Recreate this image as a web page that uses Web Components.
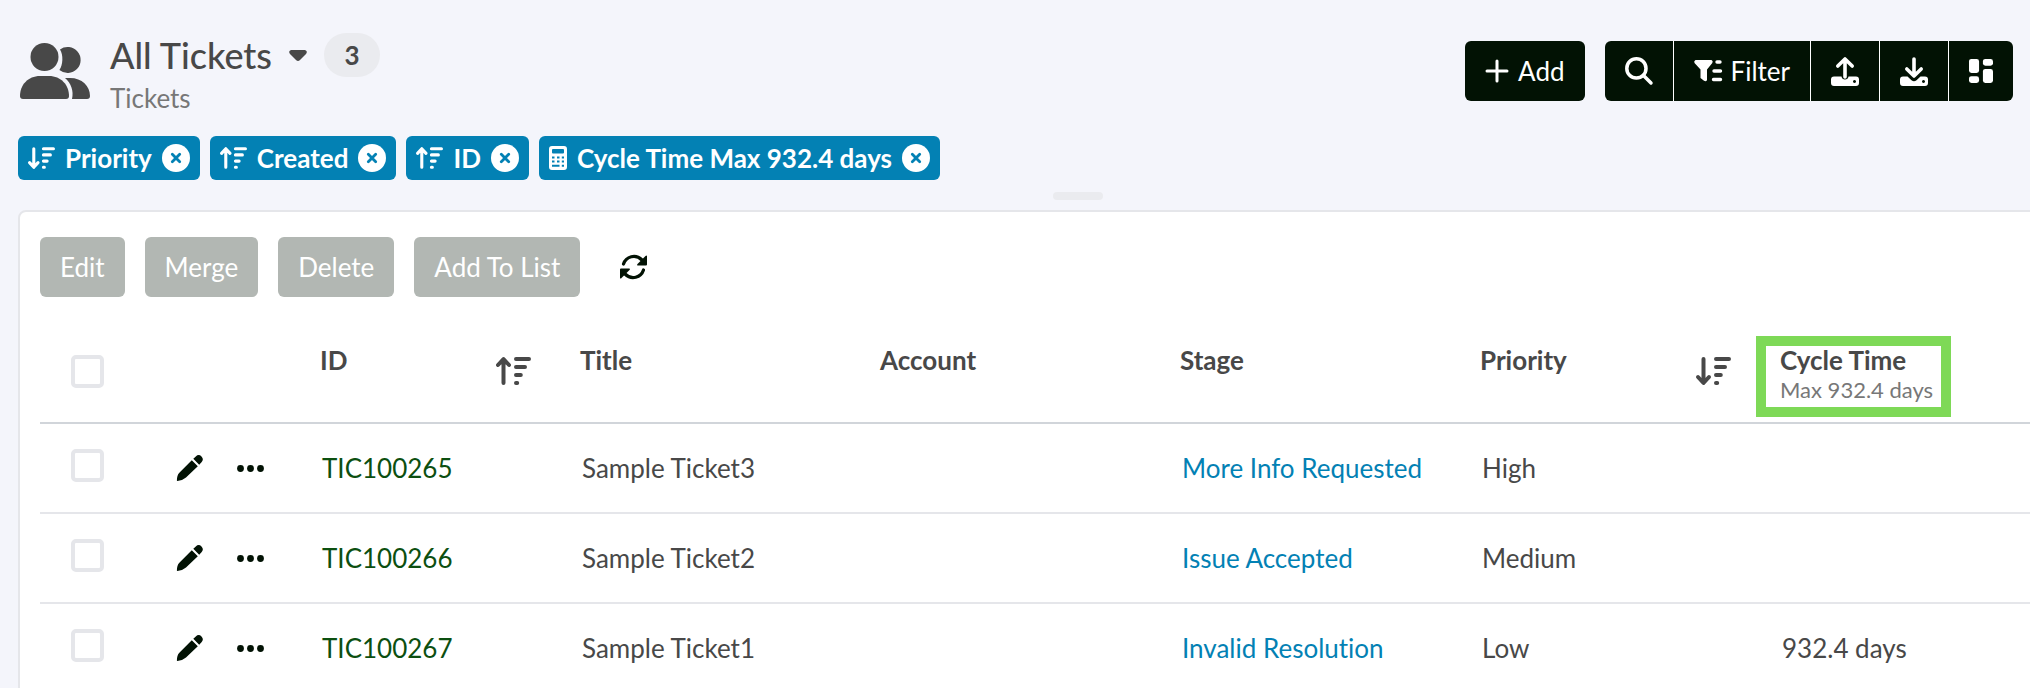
<!DOCTYPE html>
<html lang="en">
<head>
<meta charset="utf-8">
<title>All Tickets</title>
<style>
  html, body { margin: 0; height: 100%; }
  body { background: #f4f5fb; overflow: hidden; }
</style>
</head>
<body>
<ticket-app></ticket-app>
<script>
const ICONS = {
  users: ['0 0 70 56', '<circle cx="24.500" cy="14" r="14"/><path d="M40 6.500a13 13 0 1 1-.6 20.600C43 22 43.500 12 40 6.500z"/><path d="M29 33h-9C8 33 0 42 0 53q0 3 3 3h43q3 0 3-3c0-11-8-20-20-20z"/><path d="M45 35h5c12 0 20 8 20 18q0 3-3 3H52c2-8-1-16-7-21z"/>'],
  caret: ['0 0 18 11', '<path d="M2 0h14q3 1 1 4l-6 6q-2 2-4 0L1 4Q-1 1 2 0z"/>'],
  plus: ['0 0 24 24', '<path d="M12 2v20M2 12h20" fill="none" stroke="currentColor" stroke-width="3" stroke-linecap="round"/>'],
  search: ['0 0 28 28', '<g fill="none" stroke="currentColor" stroke-width="3.500"><circle cx="11.400" cy="11.400" r="9.600"/><path d="M18.500 18.500l7.500 7.500" stroke-linecap="round"/></g>'],
  filter: ['0 0 28 22', '<path d="M1.500 0h16q2 1 .8 3L13 9.500V20q-.8 2-3 .8L6.500 18V9.500L.5 3Q-.5 1 1.500 0z"/><path d="M23 2h3M20 11h6.500M19.500 19.500h7" fill="none" stroke="currentColor" stroke-width="3.400" stroke-linecap="round"/>'],
  upload: ['0 0 28 29', '<path d="M3 19.500h7.500q.5 3 3.500 3t3.500-3H25q3 0 3 3V26q0 3-3 3H3q-3 0-3-3v-3.500q0-3 3-3zM23.500 23a1.500 1.500 0 1 0 .01 0z" fill-rule="evenodd"/><path d="M14 20V2M6.800 9L14 2l7.200 7" fill="none" stroke="currentColor" stroke-width="3.600" stroke-linecap="round" stroke-linejoin="round"/>'],
  download: ['0 0 28 29', '<path d="M3 19.500h4.500l4 3.700q2.500 2.200 5 0l4-3.700H25q3 0 3 3V26q0 3-3 3H3q-3 0-3-3v-3.500q0-3 3-3zM23.500 23a1.500 1.500 0 1 0 .01 0z" fill-rule="evenodd"/><path d="M14 2v17M6.800 12l7.200 7 7.200-7" fill="none" stroke="currentColor" stroke-width="3.600" stroke-linecap="round" stroke-linejoin="round"/>'],
  board: ['0 0 25 25', '<rect width="10.500" height="14.500" rx="2.600"/><rect y="18" width="10.500" height="7" rx="2.600"/><rect x="14.500" width="10.500" height="7" rx="2.600"/><rect x="14.500" y="10.500" width="10.500" height="14.500" rx="2.600"/>'],
  down: ['0 0 35 28', '<path d="M7.500 2v23M2 20l5.500 6 5.500-6M20 2h13M20 10h9M20 18h4.800M20 26h1.200" fill="none" stroke="currentColor" stroke-width="4" stroke-linecap="round" stroke-linejoin="round"/>'],
  up: ['0 0 35 28', '<path d="M7.500 3v23M2 8l5.500-6 5.500 6M20 2h13M20 10h9M20 18h4.800M20 26h1.200" fill="none" stroke="currentColor" stroke-width="4" stroke-linecap="round" stroke-linejoin="round"/>'],
  calc: ['0 0 18 24', '<path fill-rule="evenodd" d="M3 0h12q3 0 3 3v18q0 3-3 3H3q-3 0-3-3V3q0-3 3-3zm1 3q-1 0-1 1v2.500q0 1 1 1h10q1 0 1-1V4q0-1-1-1zM3 10.500h2.500v2H3zm5 0h2.500v2H8zm4.800 0H15v2h-2.200zM3 14.500h2.500v2H3zm5 0h2.500v2H8zm4.800 0H15v2h-2.200zM3 18.700h7.500v2H3zm9.800 0H15v2h-2.200z"/>'],
  close: ['0 0 28 28', '<circle cx="14" cy="14" r="14"/><path d="M10.300 10.300l7.400 7.400M17.700 10.300l-7.400 7.400" stroke="#0381b4" stroke-width="2.800" stroke-linecap="round"/>'],
  refresh: ['0 0 27 26', '<g fill="none" stroke="currentColor" stroke-width="3.200" stroke-linecap="round"><path d="M3.500 10C6 2.500 15.500-.5 22 6"/><path d="M23.500 16C21 23.500 11.500 26.500 5 20"/></g><path d="M27 2v8.500q0 1-1 1h-8.500q-1-.5 0-1.500L25.500 2q1-1 1.500 0zM0 24v-8.500q0-1 1-1h8.500q1 .5 0 1.500L1.500 24q-1 1-1.500 0z"/>'],
  pencil: ['0 0 26 26', '<path d="M14.800 5.200l6 6L9 22.500Q5.500 25.600.4 26-.3 26-.1 25.300C0 22 .5 19.500 2.600 17.500z"/><path d="M16.300 3.800l2.500-2.400q3-2.600 5.700.1 2.700 2.800 0 5.700l-2.300 2.500z"/>'],
  dots: ['0 0 27 7', '<circle cx="3.500" cy="3.500" r="3.400"/><circle cx="13.500" cy="3.500" r="3.400"/><circle cx="23.500" cy="3.500" r="3.400"/>']
};

const BUTTON_RESET = `
  button { font: inherit; color: inherit; border: 0; margin: 0; padding: 0; background: none; cursor: pointer; }
  *, *::before { box-sizing: border-box; }`;

class UiElement extends HTMLElement {
  connectedCallback() {
    if (this.shadowRoot) return;
    this.attachShadow({ mode: 'open' }).innerHTML = `<style>${BUTTON_RESET}${this.css()}</style>${this.html()}`;
  }
}

/* <ui-icon name="..." size="width in px"> */
customElements.define('ui-icon', class extends UiElement {
  css() { return `:host { display: block; flex: none; } svg { display: block; overflow: visible; }`; }
  html() {
    const [box, shapes] = ICONS[this.getAttribute('name')];
    const [, , w, h] = box.split(' ').map(Number);
    const width = Number(this.getAttribute('size') || w);
    return `<svg aria-hidden="true" viewBox="${box}" width="${width}" height="${Math.round(width * h / w)}" fill="currentColor">${shapes}</svg>`;
  }
});

customElements.define('sort-chip', class extends UiElement {
  css() { return `
    :host { display: flex; align-items: center; gap: 10px; height: 44px; padding: 0 10px;
      border-radius: 6px; background: #0381b4; color: #fff; font-weight: 700; white-space: nowrap; }
    button { border-radius: 50%; }`; }
  html() {
    const icon = this.getAttribute('icon');
    return `<ui-icon name="${icon}" size="${icon === 'calc' ? 18 : 27}"></ui-icon><slot></slot>
      <button type="button" aria-label="Remove"><ui-icon name="close"></ui-icon></button>`;
  }
});

customElements.define('page-header', class extends UiElement {
  css() { return `
    :host { display: flex; justify-content: space-between; padding: 33px 17px 0 20px; }
    .identity { display: flex; gap: 20px; }
    .identity > ui-icon { padding-top: 10px; }
    .line { display: flex; align-items: center; height: 44px; gap: 17px; }
    h1 { margin: 0; font-size: 36px; line-height: 44px; font-weight: 500; }
    .count { min-width: 56px; text-align: center; line-height: 44px; border-radius: 22px; background: #eaebef; font-weight: 700; }
    p { margin: 0; line-height: 42px; color: #777; }
    .actions { display: flex; gap: 20px; padding-top: 8px; }
    .actions button { display: flex; align-items: center; justify-content: center; gap: 9px; height: 60px; padding: 0 20px; background: #021204; color: #fff; }
    .add { border-radius: 6px; }
    .group { display: flex; gap: 1px; background: #fff; border-radius: 6px; overflow: hidden; height: 60px; }`; }
  html() { return `
    <div class="identity">
      <ui-icon name="users"></ui-icon>
      <div>
        <div class="line"><h1>All Tickets</h1>
          <button type="button" aria-label="Choose list"><ui-icon name="caret"></ui-icon></button>
          <span class="count">3</span></div>
        <p>Tickets</p>
      </div>
    </div>
    <div class="actions">
      <button type="button" class="add"><ui-icon name="plus"></ui-icon>Add</button>
      <div class="group">
        <button type="button" aria-label="Search"><ui-icon name="search"></ui-icon></button>
        <button type="button"><ui-icon name="filter"></ui-icon>Filter</button>
        <button type="button" aria-label="Import"><ui-icon name="upload"></ui-icon></button>
        <button type="button" aria-label="Export"><ui-icon name="download"></ui-icon></button>
        <button type="button" aria-label="Layout"><ui-icon name="board" size="24"></ui-icon></button>
      </div>
    </div>`; }
});

customElements.define('bulk-actions', class extends UiElement {
  css() { return `
    :host { display: flex; align-items: center; gap: 20px; }
    .bulk { height: 60px; padding: 0 20px; border-radius: 6px; background: #b2b7b3; color: #fff; }
    .refresh { padding: 0 20px; color: #021204; }`; }
  html() {
    return ['Edit', 'Merge', 'Delete', 'Add To List']
      .map(t => `<button type="button" class="bulk" disabled>${t}</button>`).join('')
      + `<button type="button" class="refresh" aria-label="Refresh"><ui-icon name="refresh"></ui-icon></button>`;
  }
});

const TICKETS = [
  ['TIC100265', 'Sample Ticket3', '', 'More Info Requested', 'High', ''],
  ['TIC100266', 'Sample Ticket2', '', 'Issue Accepted', 'Medium', ''],
  ['TIC100267', 'Sample Ticket1', '', 'Invalid Resolution', 'Low', '932.4 days']
];

customElements.define('ticket-table', class extends UiElement {
  css() { return `
    :host { display: block; }
    table { width: 100%; table-layout: fixed; border-collapse: separate; border-spacing: 0; }
    .c-check { width: 95px; } .c-tools { width: 175px; } .c-id { width: 260px; } .c-wide { width: 300px; }
    th, td { padding: 0; text-align: left; vertical-align: middle; white-space: nowrap; }
    th { height: 104px; font-weight: 700; border-bottom: 2px solid #d1d5da; }
    td { height: 90px; border-bottom: 2px solid #e5e6ea; }
    .check { text-align: center; }
    input { appearance: none; display: block; width: 33px; height: 33px; margin: 0 auto; border: 4px solid #e5e6ea; border-radius: 5px; background: #fff; }
    td input { margin-bottom: 5px; }
    .head { display: flex; justify-content: space-between; align-items: center; height: 60px; padding: 0 39px 0 10px; }
    .label { align-self: flex-start; line-height: 38px; }
    small { display: block; font-size: 22px; line-height: 22px; font-weight: 400; color: #777; }
    .value { padding-left: 12px; }
    .tools { display: flex; align-items: center; gap: 34px; padding: 0 0 0 42px; color: #021204; }
    a { text-decoration: none; }
    .id a { color: #0c4f10; } .stage a { color: #0381b4; }
    .marked { position: relative; }
    .marked::before { content: ""; position: absolute; left: -14px; top: 16px; width: 195px; height: 81px; border: 10px solid #7ed957; pointer-events: none; }`; }
  html() {
    const head = (label, icon = '', note = '') =>
      `<th scope="col"${note ? ' class="marked"' : ''}><div class="head"><span class="label">${label}${note ? `<small>${note}</small>` : ''}</span>${icon ? `<ui-icon name="${icon}"></ui-icon>` : ''}</div></th>`;
    const row = ([id, title, account, stage, priority, cycle]) => `<tr>
      <td class="check"><input type="checkbox" aria-label="Select ${id}"></td>
      <td><div class="tools"><button type="button" aria-label="Edit ${id}"><ui-icon name="pencil"></ui-icon></button>
        <button type="button" aria-label="More for ${id}"><ui-icon name="dots"></ui-icon></button></div></td>
      <td class="value id"><a href="#${id}">${id}</a></td><td class="value">${title}</td><td class="value">${account}</td>
      <td class="value stage"><a href="#stage">${stage}</a></td><td class="value">${priority}</td><td class="value">${cycle}</td></tr>`;
    return `<table>
      <colgroup><col class="c-check"><col class="c-tools"><col class="c-id"><col class="c-wide"><col class="c-wide"><col class="c-wide"><col class="c-wide"><col></colgroup>
      <thead><tr><th class="check"><input type="checkbox" aria-label="Select all"></th><th></th>
        ${head('ID', 'up')}${head('Title')}${head('Account')}${head('Stage')}${head('Priority', 'down')}${head('Cycle Time', '', 'Max 932.4 days')}</tr></thead>
      <tbody>${TICKETS.map(row).join('')}</tbody></table>`;
  }
});

customElements.define('ticket-app', class extends UiElement {
  css() { return `
    :host { display: block; height: 100%; overflow: hidden; color: #484848; font: 400 26px/32px Lato, "Open Sans", sans-serif; font-variant-ligatures: none; }
    .chips { display: flex; gap: 10px; padding: 17px 18px 0; }
    main { margin: 0 -108px 0 18px; }
    .handle { width: 50px; height: 8px; margin: 12px auto 10px; border-radius: 4px; background: #eaebef; }
    .panel { border: 2px solid #e5e6ea; border-radius: 8px; background: #fff; padding: 25px 20px; }
    ticket-table { margin-top: 23px; }`; }
  html() { return `
    <page-header></page-header>
    <div class="chips">
      <sort-chip icon="down">Priority</sort-chip><sort-chip icon="up">Created</sort-chip>
      <sort-chip icon="up">ID</sort-chip><sort-chip icon="calc">Cycle Time Max 932.4 days</sort-chip>
    </div>
    <main>
      <div class="handle"></div>
      <div class="panel"><bulk-actions></bulk-actions><ticket-table></ticket-table></div>
    </main>`; }
});
</script>
</body>
</html>
